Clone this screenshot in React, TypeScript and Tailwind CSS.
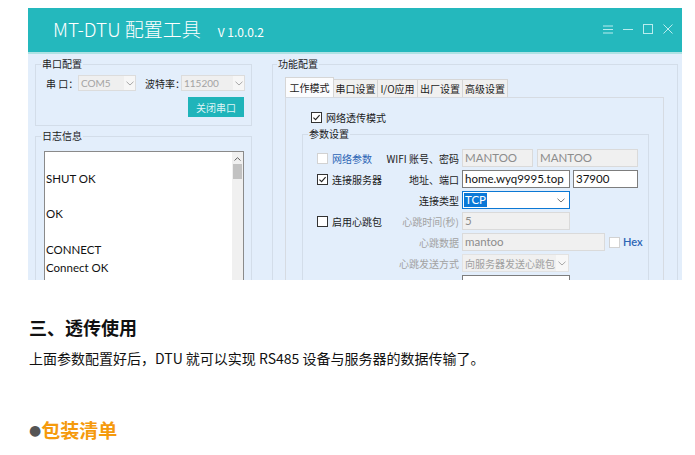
import React from "react";

const cjk = "font-['Noto_Sans_CJK_SC',sans-serif]";
const latin = "font-['Lato','Noto_Sans_CJK_SC',sans-serif]";

function Check({ checked = false, disabled = false }: { checked?: boolean; disabled?: boolean }) {
  return (
    <span
      className={`inline-flex h-[11px] w-[11px] shrink-0 items-center justify-center border bg-white ${
        disabled ? "border-[#d2d2d2]" : "border-[#333333]"
      }`}
    >
      {checked && (
        <svg width="9" height="9" viewBox="0 0 9 9">
          <path d="M1.4 4.6 L3.6 6.7 L7.6 2.1" fill="none" stroke="#222" strokeWidth="1.1" />
        </svg>
      )}
    </span>
  );
}

function Chevron({ color = "#a8a8a8" }: { color?: string }) {
  return (
    <svg width="8" height="5" viewBox="0 0 8 5">
      <path d="M0.5 0.7 L4 4 L7.5 0.7" fill="none" stroke={color} strokeWidth="1" />
    </svg>
  );
}

// combo grisé de la zone "串口配置"
function PortCombo({ value, width }: { value: string; width: string }) {
  return (
    <div className={`flex h-[16px] shrink-0 ${width} border border-[#dcdcdc] bg-[#efefef]`}>
      <div className={`flex-1 pl-[2px] text-[10px] leading-[14px] text-[#a3a3a3] ${latin}`}>{value}</div>
      <div className="flex w-[11px] items-center justify-center bg-[#f6f6f6]">
        <Chevron />
      </div>
    </div>
  );
}

function Field({
  value,
  width,
  disabled = false,
}: {
  value: string;
  width: string;
  disabled?: boolean;
}) {
  return (
    <div
      className={`h-[18px] shrink-0 overflow-hidden whitespace-nowrap ${width} border px-[2px] text-[11.5px] leading-[16px] ${latin} ${
        disabled ? "border-[#dadada] bg-[#f0f0f0] text-[#8c8c8c]" : "border-[#7d7d7d] bg-white text-[#111]"
      }`}
    >
      {value}
    </div>
  );
}

function Row({
  left,
  label,
  labelGray = false,
  children,
}: {
  left?: React.ReactNode;
  label: string;
  labelGray?: boolean;
  children: React.ReactNode;
}) {
  return (
    <div className="flex h-[18px] items-center">
      <div className="flex w-[66px] items-center gap-[4px]">{left}</div>
      <div
        className={`w-[76px] whitespace-nowrap text-right text-[10px] ${labelGray ? "text-[#a2a2a2]" : "text-[#1b1b1b]"}`}
      >
        {label}
      </div>
      <div className="ml-[3px] flex items-center gap-[4px]">{children}</div>
    </div>
  );
}

const tabs = ["工作模式", "串口设置", "I/O应用", "出厂设置", "高级设置"];
const tabWidths = ["w-[49px]", "w-[45px]", "w-[41px]", "w-[46px]", "w-[46px]"];

const logLines = ["", "SHUT OK", "", "OK", "", "CONNECT", "Connect OK", "", ""];

function DtuWindow() {
  return (
    <div className={`ml-[28px] mt-[8px] flex h-[272px] w-[654px] flex-col ${cjk}`}>
      {/* barre de titre */}
      <div className="flex h-[44px] items-start justify-between bg-[#24b8bd]">
        <div className="flex items-baseline pl-[25px] pt-[8px] text-white">
          <span className="text-[19px] leading-[26px] font-light">MT-DTU 配置工具</span>
          <span className="ml-[17px] text-[12px]">V 1.0.0.2</span>
        </div>
        <div className="flex items-center gap-[10px] pr-[9px] pt-[16px]">
          <svg width="10" height="9" viewBox="0 0 10 9">
            <path d="M0 1 H10 M0 4.5 H10 M0 8 H10" stroke="#b9ecee" strokeWidth="1" />
          </svg>
          <svg width="10" height="9" viewBox="0 0 10 9">
            <path d="M0 4.5 H10" stroke="#b9ecee" strokeWidth="1" />
          </svg>
          <svg width="10" height="10" viewBox="0 0 10 10">
            <rect x="0.5" y="0.5" width="9" height="9" fill="none" stroke="#b9ecee" strokeWidth="1" />
          </svg>
          <svg width="10" height="10" viewBox="0 0 10 10">
            <path d="M0.5 0.5 L9.5 9.5 M9.5 0.5 L0.5 9.5" stroke="#b9ecee" strokeWidth="1" />
          </svg>
        </div>
      </div>

      {/* corps */}
      <div className="flex flex-1 items-start overflow-hidden border-t-2 border-[#aee2e4] bg-[#e3eefb] text-[#1b1b1b]">
        {/* colonne gauche */}
        <div className="ml-[7px] flex w-[217px] flex-col">
          <fieldset className="mt-[3px] h-[69px] border border-[#d3dde9]">
            <legend className="ml-[5px] px-[1px] text-[10px] leading-[14px]">串口配置</legend>
            <div className="mt-[4px] flex h-[16px] items-center whitespace-nowrap pl-[10px] text-[10px]">
              <span className="w-[32px] shrink-0">串 口：</span>
              <PortCombo value="COM5" width="w-[58px]" />
              <span className="ml-[9px] w-[36px] shrink-0">波特率：</span>
              <PortCombo value="115200" width="w-[64px]" />
            </div>
            <div className="mt-[6px] flex justify-end pr-[7px]">
              <div className="flex h-[20px] w-[56px] items-center justify-center bg-[#1fb4ba] text-[10px] text-[#dff5f6]">
                关闭串口
              </div>
            </div>
          </fieldset>

          <fieldset className="mt-[3px] h-[200px] border border-[#d3dde9]">
            <legend className="ml-[5px] px-[1px] text-[10px] leading-[14px]">日志信息</legend>
            <div className="ml-[8px] mt-[8px] flex h-[160px] w-[200px] border border-[#8a8a8a] bg-white">
              <div className={`flex-1 pl-[1px] text-[11.5px] leading-[17.8px] text-[#111] ${latin}`}>
                {logLines.map((line, i) => (
                  <div key={i} className="h-[17.8px]">
                    {line}
                  </div>
                ))}
              </div>
              <div className="flex w-[11px] flex-col items-center bg-[#f0f0f0]">
                <svg className="mt-[5px]" width="7" height="4" viewBox="0 0 7 4">
                  <path d="M0.5 3.5 L3.5 0.7 L6.5 3.5" fill="none" stroke="#606060" strokeWidth="1" />
                </svg>
                <div className="mt-[3px] h-[15px] w-[9px] bg-[#c2c2c2]" />
              </div>
            </div>
          </fieldset>
        </div>

        {/* colonne droite */}
        <fieldset className="ml-[20px] mt-[3px] h-[240px] w-[406px] border border-[#d3dde9]">
          <legend className="ml-[4px] px-[1px] text-[10px] leading-[14px]">功能配置</legend>
          <div className="ml-[12px] mt-[6px] flex items-end">
            {tabs.map((t, i) => (
              <div
                key={t}
                className={`flex items-center justify-center border border-b-0 text-[10px] ${tabWidths[i]} ${
                  i === 0
                    ? "h-[20px] border-[#d6d6d6] bg-[#fbfcfe]"
                    : "-ml-[1px] h-[18px] border-[#d6d6d6] bg-[#f0f0f0]"
                }`}
              >
                {t}
              </div>
            ))}
          </div>
          <div className="ml-[12px] h-[200px] w-[379px] border border-[#d6dbe2] bg-[#e3eefb]">
            <div className="mt-[12px] flex h-[14px] items-center gap-[4px] pl-[25px] text-[10px]">
              <Check checked />
              <span>网络透传模式</span>
            </div>
            <fieldset className="ml-[16px] mt-[3px] h-[200px] w-[347px] border border-[#d3dde9]">
              <legend className="ml-[5px] px-[1px] text-[10px] leading-[14px]">参数设置</legend>
              <div className="mt-[8px] flex flex-col gap-[3px] pl-[14px]">
                <Row
                  left={
                    <>
                      <Check disabled />
                      <span className="text-[10px] text-[#2d65b5]">网络参数</span>
                    </>
                  }
                  label="WIFI 账号、密码"
                >
                  <Field value="MANTOO" width="w-[71px]" disabled />
                  <Field value="MANTOO" width="w-[101px]" disabled />
                </Row>
                <Row
                  left={
                    <>
                      <Check checked />
                      <span className="whitespace-nowrap text-[10px]">连接服务器</span>
                    </>
                  }
                  label="地址、端口"
                >
                  <div className="flex gap-[3px]">
                    <Field value="home.wyq9995.top" width="w-[108px]" />
                    <Field value="37900" width="w-[65px]" />
                  </div>
                </Row>
                <Row label="连接类型">
                  <div className="flex h-[18px] w-[108px] items-center border border-[#0b78d4] bg-white pl-[1px] pr-[4px]">
                    <span className={`bg-[#0a78d7] px-[1px] text-[11.5px] leading-[14px] text-white ${latin}`}>TCP</span>
                    <span className="flex-1" />
                    <Chevron color="#777" />
                  </div>
                </Row>
                <Row
                  left={
                    <>
                      <Check />
                      <span className="whitespace-nowrap text-[10px]">启用心跳包</span>
                    </>
                  }
                  label="心跳时间(秒)"
                  labelGray
                >
                  <Field value="5" width="w-[108px]" disabled />
                </Row>
                <Row label="心跳数据" labelGray>
                  <Field value="mantoo" width="w-[143px]" disabled />
                  <div className="flex items-center gap-[3px]">
                    <Check disabled />
                    <span className={`text-[11px] font-semibold text-[#2d65b5] ${latin}`}>Hex</span>
                  </div>
                </Row>
                <Row label="心跳发送方式" labelGray>
                  <div className="flex h-[18px] w-[107px] items-center border border-[#e2e2e2] bg-[#f0f0f0] pl-[2px]">
                    <span className="flex-1 whitespace-nowrap text-[10px] text-[#a0a0a0]">向服务器发送心跳包</span>
                    <div className="flex h-full w-[12px] items-center justify-center bg-[#f7f7f7]">
                      <Chevron />
                    </div>
                  </div>
                </Row>
                <Row label="">
                  <Field value="" width="w-[108px]" />
                </Row>
              </div>
            </fieldset>
          </div>
        </fieldset>
      </div>
    </div>
  );
}

export default function App() {
  return (
    <div className="h-[455px] w-[695px] overflow-hidden bg-white">
      <DtuWindow />
      <div className={`pl-[29px] text-[#111] ${cjk}`}>
        <h2 className="mt-[37px] text-[18px] font-bold leading-[20px]">三、透传使用</h2>
        <p className="mt-[11px] text-[14px] leading-[20px]">
          上面参数配置好后，DTU 就可以实现 RS485 设备与服务器的数据传输了。
        </p>
        <h3 className="mt-[50px] flex items-center text-[19px] font-bold leading-[24px]">
          <span className="font-['DejaVu_Sans',sans-serif] text-[14px] font-normal text-[#555]">●</span>
          <span className="text-[#f59a0c]">包装清单</span>
        </h3>
      </div>
    </div>
  );
}
